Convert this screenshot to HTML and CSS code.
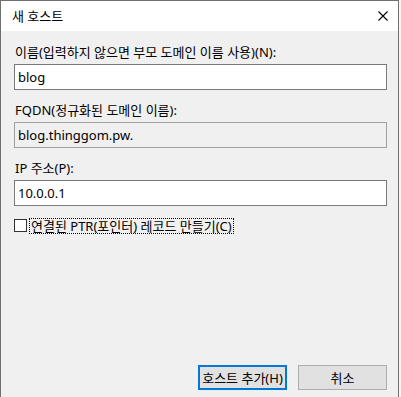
FILE: index.html
```html
<!DOCTYPE html>
<html lang="ko">
<head>
    <meta charset="UTF-8">
    <title>새 호스트</title>
    <link rel="stylesheet" href="styles.css">
</head>
<body>
<div class="dlg">
    <!--title bar-->
    <div class="dlg_title">
        <span>새 호스트</span>
        <svg class="dlg_close" width="10" height="10" viewBox="0 0 10 10"><path d="M0.5 0.5L9.5 9.5M9.5 0.5L0.5 9.5" stroke="#000" stroke-width="1.1" fill="none"/></svg>
    </div>
    <!--body-->
    <div class="dlg_body">
        <div class="field">
            <label>이름(입력하지 않으면 부모 도메인 이름 사용)(N):</label>
            <div class="txt">blog</div>
        </div>
        <div class="field">
            <label>FQDN(정규화된 도메인 이름):</label>
            <div class="txt readonly">blog.thinggom.pw.</div>
        </div>
        <div class="field">
            <label>IP 주소(P):</label>
            <div class="txt">10.0.0.1</div>
        </div>
        <div class="chk_row">
            <span class="chk"></span><span class="chk_label">연결된 PTR(포인터) 레코드 만들기(C)</span>
        </div>
        <div class="dlg_foot">
            <button class="btn btn_default">호스트 추가(H)</button>
            <button class="btn">취소</button>
        </div>
    </div>
</div>
</body>
</html>
```

FILE: styles.css
```css
/*Initialization style*/
html,body,div,p,label,span,button{margin:0;padding:0;}
html,body{height:100%;}
body{background:#f6f6f6;font:normal 13px "Noto Sans","Noto Sans CJK KR",sans-serif;color:#000;overflow:hidden;}

/*dialog*/
.dlg{width:397px;height:396px;border:1px solid #707070;border-bottom:0;background:#f0f0f0;display:flex;flex-direction:column;}
.dlg_title{height:30px;background:#fff;display:flex;align-items:center;justify-content:space-between;padding:0 10px 0 11px;}
.dlg_title span{line-height:16px;}
.dlg_close{display:block;margin-right:0;}
.dlg_body{flex:1;display:flex;flex-direction:column;padding:1px 11px 7px 13px;}

/*fields*/
.field{margin-top:12px;}
.field label{display:block;line-height:17px;padding-left:1px;}
.txt{margin-top:3px;height:24px;line-height:24px;border:1px solid #7a7a7a;background:#fff;padding:0 3px;}
.txt.readonly{background:#f0f0f0;border-color:#a0a0a0;}

/*checkbox*/
.chk_row{margin-top:12px;display:flex;align-items:center;height:15px;}
.chk{width:11px;height:11px;border:1px solid #333;background:#fff;}
.chk_label{margin-left:2px;line-height:14px;border:1px dotted #000;padding:0 1px;}

/*buttons*/
.dlg_foot{margin-top:auto;display:flex;justify-content:flex-end;gap:11px;}
.btn{width:89px;height:25px;border:1px solid #adadad;background:#e1e1e1;font:inherit;color:#000;}
.btn_default{border:2px solid #0078d7;}
```
